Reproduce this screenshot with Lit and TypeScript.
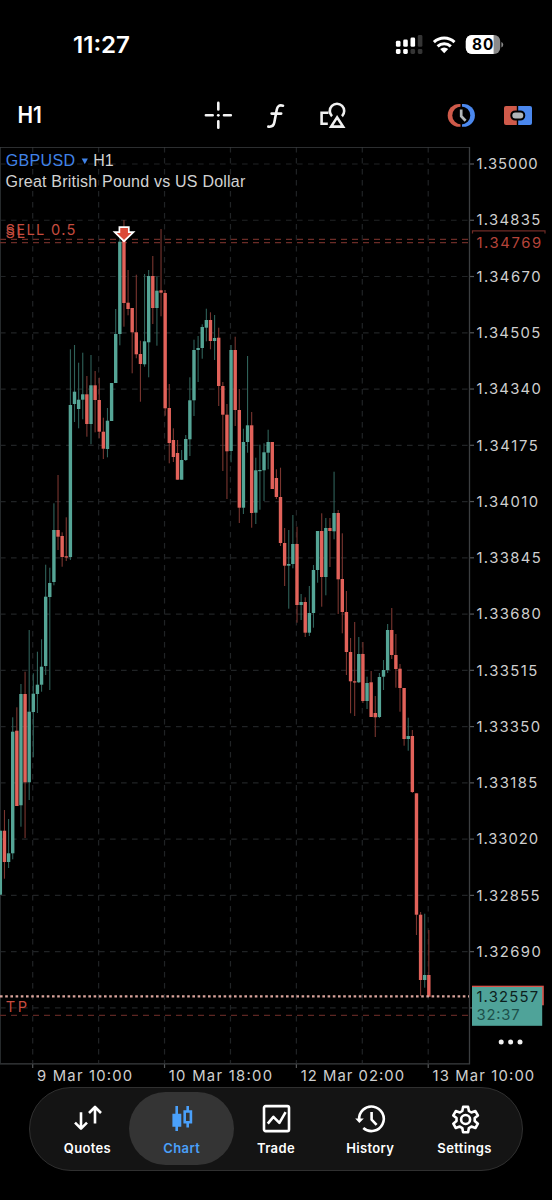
import { LitElement, html, svg, css } from "lit";
import { customElement, property } from "lit/decorators.js";

type Candle = [dir: "g" | "r", top: number, bottom: number, high: number, low: number];

const CANDLES: Candle[] = [
  ["g", 830.7, 894.7, 830.7, 894.7], ["r", 830.7, 862, 810, 878.7], ["g", 853.3, 862, 819, 868],
  ["g", 731.7, 853.3, 717.3, 859.3], ["r", 730.7, 806, 707.3, 806], ["g", 694, 805.3, 684, 826.7],
  ["r", 694, 782.3, 671.7, 838], ["g", 711.7, 782.3, 630, 800], ["g", 693.7, 712, 673.3, 757.3],
  ["g", 684.7, 694, 651.7, 713], ["g", 666.7, 684.7, 639.3, 691.7], ["g", 596.7, 666, 564.7, 675],
  ["g", 583, 597, 567.7, 690], ["g", 530, 582, 503.3, 585.3], ["r", 530, 536.7, 475, 550],
  ["r", 536, 557, 532.3, 566.7], ["r", 556.3, 557.5, 517.3, 561], ["g", 405, 557, 349.3, 560],
  ["g", 391.7, 404, 345, 422], ["g", 399.7, 409, 362.7, 428.3], ["g", 394.3, 399.7, 352.7, 419.3],
  ["r", 394.3, 424, 376, 436.7], ["g", 385.3, 424, 355, 444.3], ["r", 385.3, 400, 371, 432.3],
  ["r", 400, 431.7, 377.7, 438.3], ["r", 431.7, 448.7, 417.7, 459], ["g", 420.7, 449, 408, 457.3],
  ["g", 383, 421, 383, 421], ["g", 334, 383, 309, 383], ["g", 241.7, 334, 236, 345.3],
  ["r", 240, 303, 220, 326.7], ["r", 302.7, 309, 270, 315.3], ["r", 308, 332.3, 308, 373.3],
  ["r", 332.3, 354.3, 274.7, 358.3], ["r", 354, 364, 340.7, 401.7], ["g", 341.3, 364.3, 274, 366.7],
  ["g", 276, 342.3, 270, 377.3], ["r", 276, 308, 256, 324], ["g", 290.7, 308, 276.7, 345.7],
  ["r", 290.3, 292.7, 229, 316.3], ["r", 293, 408.3, 290, 415.7], ["r", 408, 443, 384, 463.3],
  ["r", 440, 457, 428.3, 462], ["r", 453, 479.7, 440, 479.7], ["g", 460, 479.7, 450, 479.7],
  ["g", 439, 460, 435, 461], ["g", 400.3, 439.3, 377.3, 456], ["g", 350, 400.3, 339.7, 416],
  ["g", 348, 350, 336, 382], ["g", 327, 348, 324.3, 358.7], ["g", 320, 327.7, 308.7, 341.3],
  ["r", 320, 341, 312.3, 349.3], ["g", 338, 341, 315, 360], ["r", 337.7, 386, 327.7, 406],
  ["r", 386, 414.7, 382, 471], ["r", 414.7, 451.3, 404, 499], ["g", 350, 451, 345, 462.3],
  ["r", 350, 410, 336.7, 426], ["r", 410, 507.7, 389, 523], ["g", 442, 507.7, 428.7, 514],
  ["g", 425.3, 442, 356, 452.7], ["r", 425.3, 513, 412, 527.7], ["g", 470.3, 512.7, 457.7, 524],
  ["g", 470, 471.2, 444.7, 509.7], ["g", 452.3, 470.3, 443.3, 501], ["g", 442, 452.7, 429.7, 469.3],
  ["r", 442, 489, 442, 489], ["r", 478, 497, 469.3, 499], ["r", 497, 543, 467.7, 546],
  ["r", 543, 565.7, 528, 586], ["g", 564, 565.7, 530, 608.7], ["g", 544, 564, 515, 568.3],
  ["r", 544, 605, 526.7, 622.7], ["g", 602, 605, 594, 620], ["r", 602, 632.7, 597.3, 637],
  ["g", 613, 632.7, 586, 636], ["g", 570, 613, 565, 627.7], ["g", 531, 570, 531, 582.7],
  ["r", 531, 577, 513.3, 606.7], ["g", 528, 577, 518, 595.3], ["r", 528, 531, 518, 567],
  ["g", 513, 531.3, 471.7, 539.3], ["r", 513, 579.3, 510, 614], ["r", 579, 612, 533.3, 633.3],
  ["r", 612, 652, 591, 675], ["r", 652, 681.3, 638, 713.3], ["r", 681.3, 682.5, 622, 716],
  ["g", 654, 682.3, 637, 683], ["r", 654, 701, 642, 703], ["g", 683, 701, 676.7, 709],
  ["r", 682.3, 717, 671, 717], ["r", 713, 717.3, 696, 737], ["g", 677, 717, 673, 718],
  ["g", 670, 676.7, 660, 690], ["g", 630, 670, 624, 673], ["r", 630, 655, 608, 659],
  ["r", 655, 669, 634, 687.7], ["r", 668.7, 688, 664, 711.7], ["r", 688, 739, 688, 745.7],
  ["g", 736, 739, 717.7, 750.7], ["r", 736, 792, 730, 793], ["r", 793.3, 914.7, 793.3, 935],
  ["r", 914.7, 980, 912, 996], ["g", 975, 980, 913.7, 987.7], ["r", 975, 996.7, 930, 996.7],
];

/* price text and its right edge */
const PRICES: [string, number][] = [
  ["1.35000", 537.5], ["1.34835", 540], ["1.34670", 540.3], ["1.34505", 540], ["1.34340", 540.6],
  ["1.34175", 537.6], ["1.34010", 537.8], ["1.33845", 540.6], ["1.33680", 540.6], ["1.33515", 537],
  ["1.33350", 539.8], ["1.33185", 537], ["1.33020", 537.8], ["1.32855", 539.3], ["1.32690", 540.6],
];

const TIMES: [string, number, number][] = [
  ["9 Mar 10:00", 37, 132.2], ["10 Mar 18:00", 168.8, 272],
  ["12 Mar 02:00", 300.8, 404], ["13 Mar 10:00", 432.6, 534.2],
];

const priceY = (k: number) => 164 + 56.26 * k;
const timeX = (k: number) => 32.7 + 65.92 * k;

@customElement("price-chart")
export class PriceChart extends LitElement {
  static styles = css`
    :host { display: block; height: 940px; }
    svg { display: block; }
    text { font-family: Inter, "Liberation Sans", sans-serif; }
    .grid { stroke: #202325; stroke-width: 1.2; stroke-dasharray: 5.6 5.4; }
    .frame { fill: none; stroke: #3b3e40; stroke-width: 1.3; }
    .edge { stroke: #25292b; }
    .tick { stroke: #55585a; stroke-width: 1.2; }
    .axis { font-size: 14.8px; fill: #cfcfcf; }
    .g { fill: #55a596; }
    .r { fill: #e2625a; }
    .wg { fill: #2f6159; }
    .wr { fill: #79352f; }
    .order { stroke: #6b2c27; stroke-width: 1.3; stroke-dasharray: 6 5; }
    .tp { stroke: #5d2622; stroke-width: 1.3; stroke-dasharray: 6 5; }
    .now { stroke: #d9a49c; stroke-width: 2.4; stroke-dasharray: 2.6 2.6; }
    .red { fill: #c64c3f; font-size: 14.6px; }
    .redaxis { fill: #b5443a; font-size: 14.8px; }
    .redbox { fill: none; stroke: #6e2b26; stroke-width: 1.2; }
    .tagback { fill: #d9534b; }
    .tag { fill: #4fa399; }
    .tagtext { fill: #0c1f1d; font-size: 14.8px; }
    .tagtime { fill: #1d514b; font-size: 14.8px; }
    .title { font-family: "Liberation Sans", Arial, sans-serif; font-size: 16px; fill: #d2d2d2; }
    .symbol { fill: #4083e8; }
    .dots { fill: #f0f0f0; }
    .arrow { fill: #dc4a38; stroke: #fff; stroke-width: 1.7; }
  `;

  private label(cls: string, text: string, x: number, right: number, y: number) {
    return svg`<text class=${cls} x=${x} y=${y} textLength=${(right - x).toFixed(1)}>${text}</text>`;
  }

  render() {
    return html`
      <svg width="552" height="940" viewBox="0 147 552 940">
        ${Array.from({ length: 16 }, (_, k) => svg`
          <line class="grid" x1="0" x2="469" y1=${priceY(k)} y2=${priceY(k)}></line>
          <line class="tick" x1="470" x2="474" y1=${priceY(k)} y2=${priceY(k)}></line>`)}
        ${Array.from({ length: 7 }, (_, k) => svg`
          <line class="grid" x1=${timeX(k)} x2=${timeX(k)} y1="147" y2="1063"></line>`)}
        ${[0, 2, 4, 6].map((k) => svg`
          <line class="tick" x1=${timeX(k)} x2=${timeX(k)} y1="1064" y2="1068"></line>`)}
        <line class="edge" x1="0.5" x2="0.5" y1="147" y2="1063"></line>
        <path class="frame" d="M0 147.2H469.5V1063.8H0"></path>
        <line class="order" x1="0" x2="469" y1="239.3" y2="239.3"></line>
        <line class="order" x1="0" x2="469" y1="242.7" y2="242.7"></line>
        <line class="tp" x1="0" x2="469" y1="1015.4" y2="1015.4"></line>

        ${CANDLES.map(([dir, top, bottom, high, low], i) => {
          const x = 0.3 + 4.12 * i;
          return svg`
            <rect class="w${dir}" x=${x - 0.5} y=${high} width="1.1" height=${low - high}></rect>
            <rect class=${dir} x=${x - 1.65} y=${top} width="3.4" height=${bottom - top}></rect>`;
        })}
        <line class="now" x1="0" x2="469" y1="996.4" y2="996.4"></line>
        <path class="arrow" d="M119.4 227.2h9.4v5h4.6L124 241.2l-9.3-9h4.7z"></path>

        ${this.label("title symbol", "GBPUSD", 5.8, 75, 166)}
        <path class="symbol" d="M81.7 158.4h6.2l-3.1 5.8z"></path>
        ${this.label("title", "H1", 93.2, 113.6, 166)}
        ${this.label("title", "Great British Pound vs US Dollar", 5.6, 245.3, 186.6)}
        ${this.label("red", "SELL 0.5", 5.6, 75.4, 235.3)}
        ${this.label("red", "SL", 5.6, 25, 238.2)}
        ${this.label("red", "TP", 5.8, 27, 1011.6)}

        ${PRICES.map(([t, right], k) => this.label("axis", t, 476.4, right + 0.2, priceY(k) + 5.2))}
        ${TIMES.map(([t, x, right]) => this.label("axis", t, x, right, 1081.2))}
        <path class="redbox" d="M472.5 233.4v-2.6H545v2.6"></path>
        ${this.label("redaxis", "1.34769", 476.4, 541.2, 248)}
        <rect class="tagback" x="472" y="985.7" width="71.8" height="19.6"></rect>
        <rect class="tag" x="472" y="987" width="70.2" height="38.8"></rect>
        ${this.label("tagtext", "1.32557", 476.4, 538, 1002)}
        ${this.label("tagtime", "32:37", 476.6, 519.6, 1020)}
        <g class="dots">
          <circle cx="501.2" cy="1042" r="2.5"></circle>
          <circle cx="510.6" cy="1042" r="2.5"></circle>
          <circle cx="520" cy="1042" r="2.5"></circle>
        </g>
      </svg>`;
  }
}

const ICONS: Record<string, unknown> = {
  Quotes: svg`<path class="line" d="M10 9.2V25.4M4 19.6l6 6 6-6M24 20.4V4.2M18 10l6-6 6 6"></path>`,
  Chart: svg`<path class="solid" d="M7.4 10.7h3V3H13v7.7h3.3V23.8H13V28h-2.6v-4.2h-3z"></path>
    <path class="solid" fill-rule="evenodd" d="M18.4 7.2h3V3H24v4.2h3.2V20.6H24V24.6h-2.6v-4h-3zM21 9.8V18h3.6V9.8z"></path>`,
  Trade: svg`<rect class="line" x="5" y="3.1" width="25" height="25" rx="1.6"></rect>
    <path class="line" d="M8.8 20.6l5.6-6.8 6 6L26.6 9.2"></path>`,
  History: svg`<path class="line" d="M5.2 17A12.3 12.3 0 1 1 9.3 25"></path>
    <path class="solid" d="M1.2 15.6h8.6L5.4 20z"></path>
    <path class="line" d="M17.6 9v7.6l5 5.2"></path>`,
  Settings: svg`<path class="line" d="M15.1 3.9h5l.8 4.1 2.5 1.5 4-1.4 2.5 4.3-3.2 2.7v2.9l3.2 2.7-2.5 4.3-4-1.4-2.5 1.5-.8 4.1h-5l-.8-4.1-2.5-1.5-4 1.4-2.5-4.3 3.2-2.7v-2.9l-3.2-2.7 2.5-4.3 4 1.4 2.5-1.5z"></path>
    <circle class="line" cx="17.6" cy="16.5" r="4.5"></circle>`,
};

@customElement("tab-item")
export class TabItem extends LitElement {
  @property() name = "";
  static styles = css`
    :host { display: flex; flex-direction: column; align-items: center; position: relative;
      width: 94.3px; padding-top: 14.5px; box-sizing: border-box; color: #fff; height: 100%; }
    :host([active]) { color: #4aa0fa; }
    :host([active])::before { content: ""; position: absolute; inset: 4px -5.6px 4.6px; border-radius: 37px; background: #343434; }
    svg { display: block; position: relative; margin-left: 1.4px; }
    .line { fill: none; stroke: currentColor; stroke-width: 2.6; stroke-linejoin: round; }
    .solid { fill: currentColor; }
    .name { position: relative; margin-top: 4.2px; font: 600 13px/18px Inter, sans-serif; letter-spacing: 0.35px; padding-left: 0.7px; }
  `;
  render() {
    return html`<svg width="34" height="32" viewBox="0 0 34 32">${ICONS[this.name]}</svg>
      <span class="name">${this.name}</span>`;
  }
}

@customElement("app-root")
export class AppRoot extends LitElement {
  static styles = css`
    :host { display: flex; flex-direction: column; width: 552px; height: 1200px; background: #000;
      overflow: hidden; font-family: Inter, sans-serif; color: #fff; }
    svg { display: block; }
    .status { display: flex; align-items: flex-start; height: 89px; padding: 30px 48px 0 70px;
      box-sizing: border-box; justify-content: space-between; }
    .tools { display: flex; height: 58px; align-items: flex-start; padding: 8px 16px 0; box-sizing: border-box; }
    .drawing { margin-left: 154px; }
    .trading { margin-left: auto; }
    .bold { font-family: Inter, sans-serif; font-weight: 600; fill: #fff; }
    .batt { font-family: Inter, sans-serif; font-weight: 700; font-size: 15.4px; fill: #000; }
    .on { fill: #fff; }
    .off { fill: #353535; }
    .arc { fill: none; stroke: #fff; stroke-width: 3; }
    .line { fill: none; stroke: #f4f4f4; stroke-width: 2.6; stroke-linecap: round; }
    .square { fill: none; stroke: #f0f0f0; stroke-width: 2.6; }
    .red { fill: #cf5a4a; }
    .blue { fill: #4b88ee; }
    .black { fill: #000; }
    .hand { fill: none; stroke: #b4b9bb; stroke-width: 2.7; }
    .pill { fill: #b0b6b8; stroke: #000; stroke-width: 2; }
    .nav { display: flex; width: 493.4px; height: 84px; margin-left: 29.3px; padding: 0 10.4px 0 9.7px;
      box-sizing: border-box; border: 1px solid #303030; border-radius: 42px; background: #141414; }
  `;

  render() {
    return html`
      <header class="status">
        <svg width="62" height="32" viewBox="70 30 62 32">
          <text class="bold" font-size="22.4" x="73" y="53" textLength="57" lengthAdjust="spacingAndGlyphs">11:27</text>
        </svg>
        <svg width="112" height="32" viewBox="392 30 112 32">
          <g class="on">
            <rect x="395.9" y="40.8" width="4.6" height="6" rx="1.4"></rect>
            <rect x="403.2" y="39.5" width="4.6" height="7.3" rx="1.4"></rect>
            <rect x="410.5" y="37.5" width="4.6" height="9.3" rx="1.4"></rect>
            <rect x="395.9" y="49" width="4.6" height="5" rx="1.4"></rect>
            <rect x="403.2" y="49" width="4.6" height="5" rx="1.4"></rect>
          </g>
          <g class="off">
            <rect x="417.8" y="35" width="4.6" height="11.8" rx="1.4"></rect>
            <rect x="410.5" y="49" width="4.6" height="5" rx="1.4"></rect>
            <rect x="417.8" y="49" width="4.6" height="5" rx="1.4"></rect>
          </g>
          <path class="arc" d="M433.9 42.2a15 15 0 0 1 20.6 0M437.6 46.4a9.6 9.6 0 0 1 13.2 0"></path>
          <path class="on" d="M444.2 53.2l-4-4.1a5.8 5.8 0 0 1 8 0z"></path>
          <clipPath id="cell"><rect x="465.8" y="35" width="34.4" height="19" rx="6"></rect></clipPath>
          <g clip-path="url(#cell)">
            <rect x="465" y="34" width="36" height="21" fill="#8a8a8a"></rect>
            <rect class="on" x="465" y="34" width="28.6" height="21"></rect>
          </g>
          <path d="M501.4 42a2.9 2.9 0 0 1 0 5.4z" fill="#8a8a8a"></path>
          <text class="batt" x="472" y="50.3" textLength="21.4">80</text>
        </svg>
      </header>
      <div class="tools">
        <svg width="30" height="36" viewBox="16 97 30 36">
          <text class="bold" font-size="22.4" x="17.4" y="122.8" textLength="24.4" lengthAdjust="spacingAndGlyphs">H1</text>
        </svg>
        <svg class="drawing" width="150" height="36" viewBox="200 97 150 36">
          <path class="line" d="M218.3 102.9v6.6M218.3 121.2v6.6M205.9 115.3h6.8M224 115.3h6.8"></path>
          <circle class="on" cx="218.3" cy="115.3" r="1.4"></circle>
          <path class="line" d="M283 105.7c-3.9-1-5.5.5-6.2 3.9l-2.5 13c-.6 3.2-2.4 4.6-6 4M271.6 113.6h9.6"></path>
          <path class="square" d="M332 116.2a7.2 7.2 0 1 1 10 0M328.5 112.8h-6.9v11h6.2M337.1 117.4l-6 9.2h12z"></path>
        </svg>
        <svg class="trading" width="90" height="36" viewBox="446 97 90 36">
          <path class="red" d="M460.5 104h-1.4a11.4 11.4 0 0 0 0 22.8h1.4z"></path>
          <path class="blue" d="M462 104h1.5a11.4 11.4 0 0 1 0 22.8H462z"></path>
          <circle class="black" cx="461.3" cy="115.4" r="9"></circle>
          <path class="hand" d="M461.2 109.6v6.6l4.4 4.6"></path>
          <path class="red" d="M516.8 106h-10.8a2 2 0 0 0-2 2v15a2 2 0 0 0 2 2h10.8z"></path>
          <path class="blue" d="M518.2 106H530a2 2 0 0 1 2 2v15a2 2 0 0 1-2 2h-11.8z"></path>
          <rect class="pill" x="511.3" y="111.4" width="13" height="8.2" rx="4"></rect>
        </svg>
      </div>
      <price-chart></price-chart>
      <nav class="nav">
        <tab-item name="Quotes"></tab-item>
        <tab-item name="Chart" active></tab-item>
        <tab-item name="Trade"></tab-item>
        <tab-item name="History"></tab-item>
        <tab-item name="Settings"></tab-item>
      </nav>`;
  }
}
